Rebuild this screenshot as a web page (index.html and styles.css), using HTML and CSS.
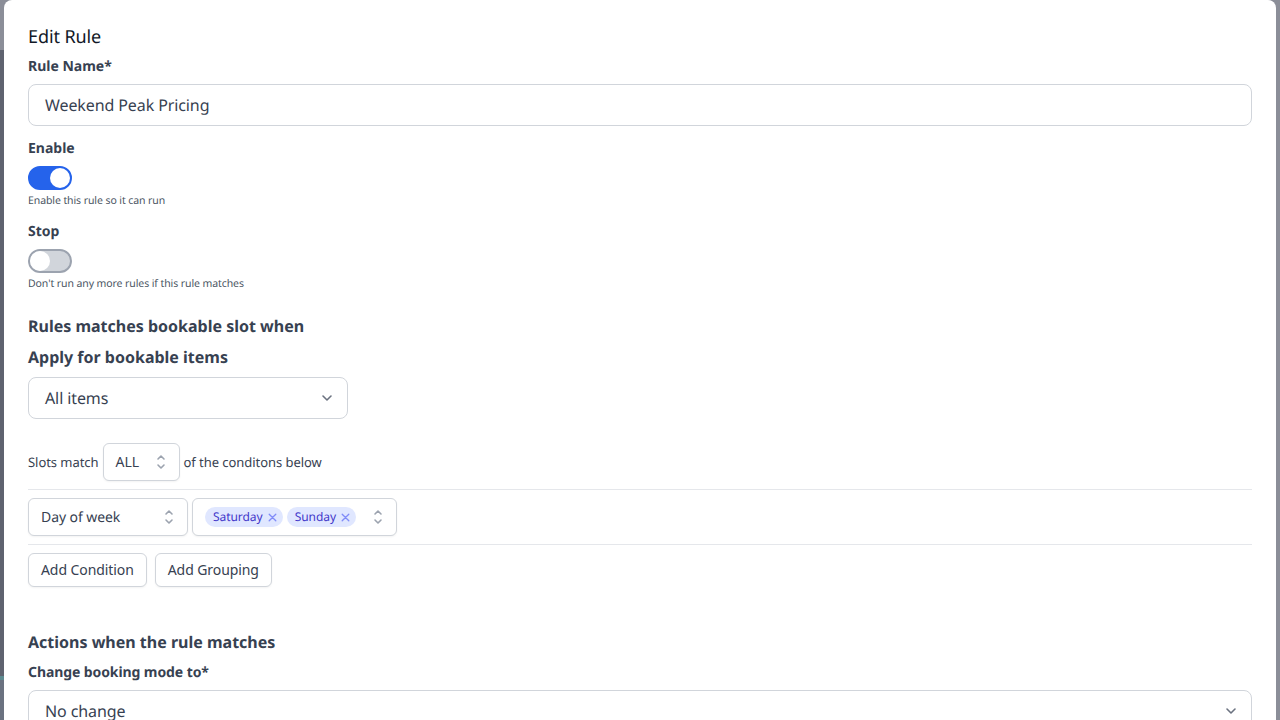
FILE: index.html
```html
<!DOCTYPE html>
<html lang="en">
<head>
<meta charset="utf-8">
<title>Edit Rule</title>
<link rel="stylesheet" href="styles.css">
</head>
<body>
<div class="backdrop">
  <div class="side side-left"><span class="band-top"></span><span class="band-teal"></span><span class="band-low"></span></div>
  <main class="modal">
    <h1 class="title">Edit Rule</h1>
    <label class="label">Rule Name*</label>
    <div class="field text-field">Weekend Peak Pricing</div>

    <label class="label toggle-label">Enable</label>
    <div class="toggle on"><span class="knob"></span></div>
    <p class="hint">Enable this rule so it can run</p>

    <label class="label stop-label">Stop</label>
    <div class="toggle off"><span class="knob"></span></div>
    <p class="hint">Don't run any more rules if this rule matches</p>

    <h2 class="section first-section">Rules matches bookable slot when</h2>
    <h2 class="section apply">Apply for bookable items</h2>
    <div class="field select-field items-select">
      <span>All items</span>
      <svg class="chevron" viewBox="0 0 20 20" fill="none" stroke="#6b7280" stroke-width="1.6" stroke-linecap="round" stroke-linejoin="round"><path d="M6 8l4 4 4-4"/></svg>
    </div>

    <div class="match-row">
      <span>Slots match</span>
      <div class="mini-select all-select"><span>ALL</span>
        <svg class="updown" viewBox="0 0 20 20" fill="none" stroke="#9ca3af" stroke-width="1.6" stroke-linecap="round" stroke-linejoin="round"><path d="M7 7l3-3 3 3M7 13l3 3 3-3"/></svg>
      </div>
      <span>of the conditons below</span>
    </div>

    <div class="condition-row">
      <div class="mini-select day-select"><span>Day of week</span>
        <svg class="updown" viewBox="0 0 20 20" fill="none" stroke="#9ca3af" stroke-width="1.6" stroke-linecap="round" stroke-linejoin="round"><path d="M7 7l3-3 3 3M7 13l3 3 3-3"/></svg>
      </div>
      <div class="mini-select tags-select">
        <div class="tags">
          <span class="tag"><span class="tag-text">Saturday</span><svg class="x" viewBox="0 0 10 10" fill="none" stroke="#818cf8" stroke-width="1.2" stroke-linecap="round"><path d="M2 2l6 6M8 2l-6 6"/></svg></span>
          <span class="tag"><span class="tag-text">Sunday</span><svg class="x" viewBox="0 0 10 10" fill="none" stroke="#818cf8" stroke-width="1.2" stroke-linecap="round"><path d="M2 2l6 6M8 2l-6 6"/></svg></span>
        </div>
        <svg class="updown" viewBox="0 0 20 20" fill="none" stroke="#9ca3af" stroke-width="1.6" stroke-linecap="round" stroke-linejoin="round"><path d="M7 7l3-3 3 3M7 13l3 3 3-3"/></svg>
      </div>
    </div>

    <div class="button-row">
      <button class="btn">Add Condition</button>
      <button class="btn">Add Grouping</button>
    </div>

    <h2 class="section actions">Actions when the rule matches</h2>
    <label class="label mode-label">Change booking mode to*</label>
    <div class="field select-field">
      <span>No change</span>
      <svg class="chevron" viewBox="0 0 20 20" fill="none" stroke="#6b7280" stroke-width="1.6" stroke-linecap="round" stroke-linejoin="round"><path d="M6 8l4 4 4-4"/></svg>
    </div>
  </main>
</div>
</body>
</html>
```
FILE: styles.css
```css
* { box-sizing: border-box; }
html, body { margin: 0; height: 100%; overflow: hidden; }
body { font-family: "Noto Sans", "Open Sans", sans-serif; color: #374151; text-rendering: geometricPrecision; }
.backdrop { position: relative; height: 720px; background: #8b8e98; display: flex; justify-content: center; overflow: hidden; }
.side { position: absolute; left: 0; top: 0; width: 4px; height: 100%; background: #5f636f; }
.band-top { display: block; height: 50px; background: #8b8e98; }
.band-teal { position: absolute; left: 0; top: 676px; width: 100%; height: 4px; background: #5d8a90; }
.band-low { position: absolute; left: 0; top: 680px; width: 100%; height: 40px; background: #6b7280; }
.modal { position: relative; width: 1272px; height: 760px; background: #fff; border-radius: 8px 8px 0 0; padding: 25px 24px 0; flex: none; }
.title { margin: 0; font-size: 18px; line-height: 24px; font-weight: 400; color: #111827; letter-spacing: -0.1px; }
.label { display: block; font-size: 14px; line-height: 20px; padding-top: 1px; font-weight: 700; color: #374151; }
.title + .label { margin-top: 7px; }
.field { border: 1px solid #d1d5db; border-radius: 8px; height: 42px; padding: 0 16px; font-size: 16px; letter-spacing: -0.1px; display: flex; align-items: center; color: #374151; background: #fff; }
.text-field { margin-top: 7px; }
.toggle-label { margin-top: 12px; }
.toggle { width: 44px; height: 24px; border-radius: 12px; border: 2px solid; margin-top: 7px; position: relative; }
.toggle.on { background: #2563eb; border-color: #2563eb; }
.toggle.off { background: #d1d5db; border-color: #9ca3af; }
.knob { position: absolute; top: 0; width: 20px; height: 20px; border-radius: 50%; background: #fff; }
.on .knob { left: 20px; }
.off .knob { left: 0; }
.hint { margin: 2px 0 0; padding-top: 1px; font-size: 10.5px; line-height: 16px; letter-spacing: -0.09px; color: #4b5563; }
.stop-label { margin-top: 12px; }
.section { margin: 0; font-size: 16px; line-height: 24px; font-weight: 700; color: #374151; }
.first-section { margin-top: 22px; }
.apply { margin-top: 7px; }
.items-select { width: 320px; margin-top: 8px; }
.select-field { justify-content: space-between; padding-right: 10px; }
.chevron { width: 20px; height: 20px; flex: none; }
.match-row { display: flex; align-items: center; gap: 4px; margin-top: 24px; font-size: 13px; line-height: 20px; letter-spacing: -0.05px; color: #374151; }
.mini-select { border: 1px solid #d1d5db; border-radius: 6px; height: 38px; display: flex; align-items: center; justify-content: space-between; font-size: 14px; line-height: 19px; letter-spacing: -0.08px; background: #fff; color: #374151; box-shadow: 0 1px 2px rgba(0,0,0,.05); }
.all-select { width: 77px; padding: 0 8px 0 12px; }
.day-select { width: 160px; padding: 0 8px 0 12px; }
.tags-select { width: 205px; padding: 0 8px 0 12px; }
.updown { width: 20px; height: 20px; flex: none; }
.condition-row { display: flex; gap: 4px; margin-top: 8px; padding: 8px 0; border-top: 1px solid #e5e7eb; border-bottom: 1px solid #e5e7eb; }
.tags { display: flex; gap: 4px; }
.tag { display: inline-flex; align-items: center; gap: 4px; height: 20px; padding: 0 5px 0 8px; border-radius: 10px; background: #e0e7ff; color: #4338ca; font-size: 12px; letter-spacing: -0.05px; }
.tag-text { padding-bottom: 2px; }
.x { width: 11px; height: 11px; }
.button-row { display: flex; gap: 8px; margin-top: 8px; }
.btn { font: inherit; font-size: 14px; line-height: 20px; letter-spacing: -0.08px; height: 34px; padding: 0 12px; border: 1px solid #d1d5db; border-radius: 6px; background: #fff; color: #374151; box-shadow: 0 1px 2px rgba(0,0,0,.05); }
.actions { margin-top: 43px; }
.mode-label { margin-top: 8px; letter-spacing: -0.09px; }
.mode-label + .field { margin-top: 7px; }
```
